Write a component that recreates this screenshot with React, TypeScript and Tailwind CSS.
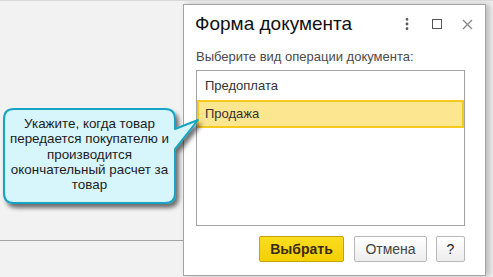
import { MoreVertical } from "lucide-react";

const hintLines = [
  "Укажите, когда товар",
  "передается покупателю и",
  "производится",
  "окончательный расчет за",
  "товар",
];

function Callout() {
  return (
    <div className="absolute left-0 top-0 w-[210px] h-[215px] pointer-events-none">
      <svg width="210" height="215" className="absolute left-0 top-0">
        <defs>
          <filter id="hintShadow" x="-10%" y="-10%" width="130%" height="130%">
            <feDropShadow dx="3" dy="4" stdDeviation="2" floodColor="#000" floodOpacity="0.55" />
          </filter>
        </defs>
        <path
          d="M14,108 H165 Q175,108 175,118 V128 L198,119 L175,148 V192 Q175,202 165,202 H14 Q4,202 4,192 V118 Q4,108 14,108 Z"
          fill="#d7f6fc"
          stroke="#18a4c2"
          strokeWidth="2"
          strokeLinejoin="round"
          filter="url(#hintShadow)"
        />
      </svg>
      <div className="absolute left-[4px] top-[115px] w-[171px] text-center text-[13.4px] leading-[15.3px] text-[#1c1c1c]">
        {hintLines.map((line) => (
          <div key={line}>{line}</div>
        ))}
      </div>
    </div>
  );
}

function DocumentForm() {
  return (
    <div className="w-[303px] h-[272px] bg-white border border-[#a3a3a3] shadow-[4px_0_6px_rgba(0,0,0,0.22)] flex flex-col">
      <div className="h-[38px] flex items-center pl-[11px] pr-[3px]">
        <span className="text-[19px] text-[#111]">Форма документа</span>
        <div className="ml-auto flex items-center">
          <div className="w-[30px] h-[30px] flex items-center justify-center text-[#555]">
            <MoreVertical size={16} strokeWidth={2.2} />
          </div>
          <div className="w-[30px] h-[30px] flex items-center justify-center">
            <div className="w-[10px] h-[10px] border-[1.5px] border-[#555]" />
          </div>
          <div className="w-[30px] h-[30px] flex items-center justify-center">
            <svg width="11" height="11" viewBox="0 0 11 11">
              <path d="M1 1 L10 10 M10 1 L1 10" stroke="#8a8a8a" strokeWidth="1.4" />
            </svg>
          </div>
        </div>
      </div>
      <div className="pl-[12px] pr-[20px] flex flex-col">
        <div className="mt-[6px] h-[16px] leading-[16px] text-[13px] text-[#4a4a4a]">
          Выберите вид операции документа:
        </div>
        <div className="mt-[5px] h-[156px] border border-[#a3a3a3] flex flex-col">
          <div className="h-[29px] flex items-center pl-[8px] text-[13px] text-[#333]">Предоплата</div>
          <div className="h-[28px] flex items-center pl-[6px] text-[13px] text-[#333] bg-[#fde690] border-2 border-[#f6c91c]">
            Продажа
          </div>
        </div>
        <div className="mt-[10px] flex justify-end gap-[9px]">
          <button className="h-[26px] w-[85px] mr-[1px] rounded-[2px] border border-[#c4a500] bg-linear-to-b from-[#fbdd1e] to-[#f3d000] text-[14px] font-bold text-[#3b2a14]">
            Выбрать
          </button>
          <button className="h-[26px] w-[73px] rounded-[2px] border border-[#b8b8b8] bg-linear-to-b from-white to-[#ededed] text-[14px] text-[#444]">
            Отмена
          </button>
          <button className="h-[26px] w-[29px] rounded-[2px] border border-[#b8b8b8] bg-linear-to-b from-white to-[#ededed] text-[14px] text-[#222]">
            ?
          </button>
        </div>
      </div>
    </div>
  );
}

export default function App() {
  return (
    <div className="relative w-[493px] h-[277px] overflow-hidden bg-[#f2f2f2] border-t border-[#d8d8d8] font-['Liberation_Sans',Arial,sans-serif]">
      <div className="flex pt-[3px]">
        <div className="w-[183px] shrink-0">
          <div className="h-[237px] border-b border-[#a3a3a3]" />
        </div>
        <DocumentForm />
      </div>
      <Callout />
    </div>
  );
}
